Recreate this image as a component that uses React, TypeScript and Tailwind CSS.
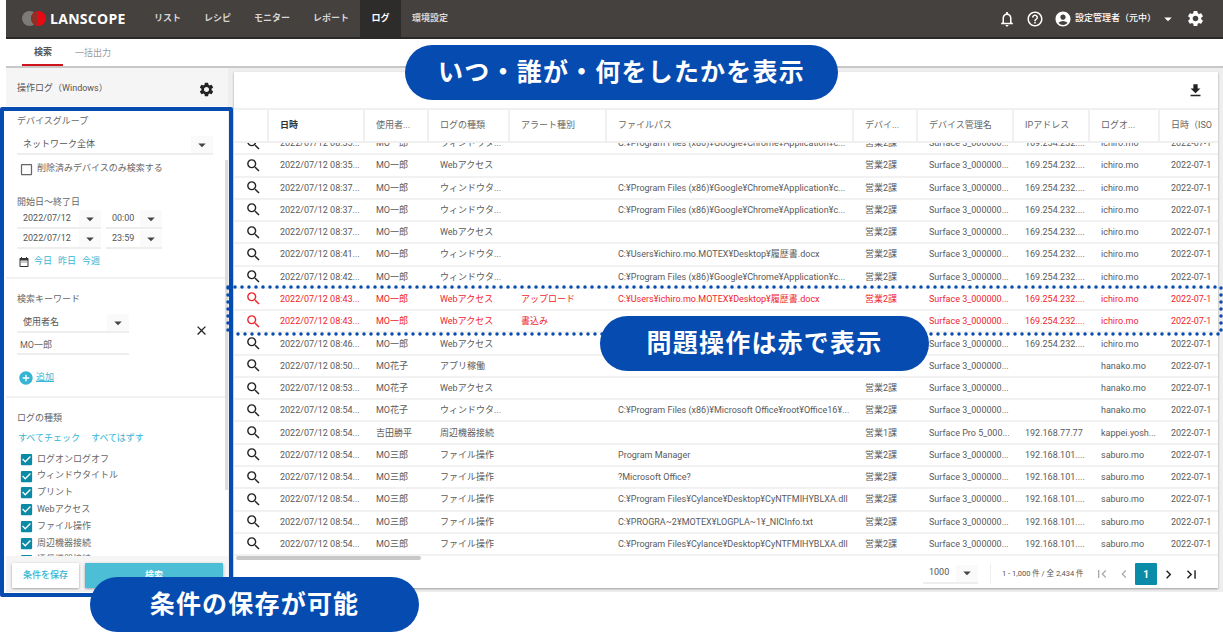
import {
  MdAccountCircle,
  MdAddCircle,
  MdArrowDropDown,
  MdCheckBox,
  MdCheckBoxOutlineBlank,
  MdChevronLeft,
  MdChevronRight,
  MdClose,
  MdDateRange,
  MdFileDownload,
  MdFirstPage,
  MdHelpOutline,
  MdLastPage,
  MdNotificationsNone,
  MdSearch,
  MdSettings,
} from "react-icons/md";

const navItems = ["リスト", "レシピ", "モニター", "レポート"];

const logTypes = [
  "ログオンログオフ",
  "ウィンドウタイトル",
  "プリント",
  "Webアクセス",
  "ファイル操作",
  "周辺機器接続",
  "通信機器接続",
];

const columns = [
  { label: "", width: 34 },
  { label: "日時", width: 96 },
  { label: "使用者...", width: 64 },
  { label: "ログの種類", width: 81 },
  { label: "アラート種別", width: 97 },
  { label: "ファイルパス", width: 247 },
  { label: "デバイ...", width: 64 },
  { label: "デバイス管理名", width: 96 },
  { label: "IPアドレス", width: 76 },
  { label: "ログオ...", width: 70 },
  { label: "日時（ISO", width: 55 },
];

const CHROME = "C:¥Program Files (x86)¥Google¥Chrome¥Application¥c...";
const RESUME = "C:¥Users¥ichiro.mo.MOTEX¥Desktop¥履歴書.docx";
const CYLANCE = "C:¥Program Files¥Cylance¥Desktop¥CyNTFMIHYBLXA.dll";
const WINDOW = "ウィンドウタ...";
const WEB = "Webアクセス";
const FILE = "ファイル操作";
const S3 = "Surface 3_000000...";
const IP1 = "169.254.232....";
const IP2 = "192.168.101....";

// time, user, log type, alert, path, dept, device, ip, logon, danger
const rows: [string, string, string, string, string, string, string, string, string, boolean?][] = [
  ["08:35", "MO一郎", WINDOW, "", CHROME, "営業2課", S3, IP1, "ichiro.mo"],
  ["08:35", "MO一郎", WEB, "", "", "営業2課", S3, IP1, "ichiro.mo"],
  ["08:37", "MO一郎", WINDOW, "", CHROME, "営業2課", S3, IP1, "ichiro.mo"],
  ["08:37", "MO一郎", WINDOW, "", CHROME, "営業2課", S3, IP1, "ichiro.mo"],
  ["08:37", "MO一郎", WEB, "", "", "営業2課", S3, IP1, "ichiro.mo"],
  ["08:41", "MO一郎", WINDOW, "", RESUME, "営業2課", S3, IP1, "ichiro.mo"],
  ["08:42", "MO一郎", WINDOW, "", CHROME, "営業2課", S3, IP1, "ichiro.mo"],
  ["08:43", "MO一郎", WEB, "アップロード", RESUME, "営業2課", S3, IP1, "ichiro.mo", true],
  ["08:43", "MO一郎", WEB, "書込み", "", "営業2課", S3, IP1, "ichiro.mo", true],
  ["08:46", "MO一郎", WEB, "", "", "営業2課", S3, IP1, "ichiro.mo"],
  ["08:50", "MO花子", "アプリ稼働", "", "", "営業2課", S3, "", "hanako.mo"],
  ["08:53", "MO花子", WEB, "", "", "営業2課", S3, "", "hanako.mo"],
  ["08:54", "MO花子", WINDOW, "", "C:¥Program Files (x86)¥Microsoft Office¥root¥Office16¥...", "営業2課", S3, "", "hanako.mo"],
  ["08:54", "吉田勝平", "周辺機器接続", "", "", "営業1課", "Surface Pro 5_000...", "192.168.77.77", "kappei.yosh..."],
  ["08:54", "MO三郎", FILE, "", "Program Manager", "営業2課", S3, IP2, "saburo.mo"],
  ["08:54", "MO三郎", FILE, "", "?Microsoft Office?", "営業2課", S3, IP2, "saburo.mo"],
  ["08:54", "MO三郎", FILE, "", CYLANCE, "営業2課", S3, IP2, "saburo.mo"],
  ["08:54", "MO三郎", FILE, "", "C:¥PROGRA~2¥MOTEX¥LOGPLA~1¥_NICInfo.txt", "営業2課", S3, IP2, "saburo.mo"],
  ["08:54", "MO三郎", FILE, "", CYLANCE, "営業2課", S3, IP2, "saburo.mo"],
];

function PanelSelect({ value, className }: { value: string; className: string }) {
  return (
    <div className={`flex items-center justify-between border-b-2 border-[#eeeeee] ${className}`}>
      <span className="pl-[6px] text-[9px] leading-none text-[#555555]">{value}</span>
      <span className="flex h-full w-[22px] items-center justify-center bg-[#fafafa] text-[#444444]">
        <MdArrowDropDown size={18} />
      </span>
    </div>
  );
}

function Cell({ width, danger, children }: { width: number; danger?: boolean; children: string }) {
  return (
    <div
      className={`shrink-0 pl-3 whitespace-nowrap ${danger ? "text-[#f0242c]" : "text-[#5a5a5a]"}`}
      style={{ width }}
    >
      {children}
    </div>
  );
}

function Callout({ className, children }: { className: string; children: string }) {
  return (
    <div
      className={`absolute z-30 flex items-center justify-center rounded-full bg-[#064bb0] text-[25px] leading-none font-bold tracking-[1.2px] text-white ${className}`}
    >
      {children}
    </div>
  );
}

export default function App() {
  return (
    <div className="relative h-[632px] w-[1223px] overflow-hidden bg-white font-[Roboto,'Noto_Sans_CJK_JP',sans-serif]">
      <div className="ml-[6px] flex h-[592px] flex-col bg-[#eeeeee]">
        {/* Header */}
        <header className="flex h-[39px] shrink-0 items-center border-b-2 border-[#2b2928] bg-[#45413f] text-white">
          <div className="ml-[16px] flex w-[132px] items-center">
            <div className="relative h-[15px] w-[24px] shrink-0">
              <span className="absolute top-0 left-0 size-[15px] rounded-full bg-[#7d7b78]" />
              <span className="absolute top-0 left-[9px] size-[15px] rounded-full bg-[#e60a14]" />
              <span className="absolute top-[1px] left-[9px] h-[13px] w-[6px] rounded-l-full bg-[#8d3026]" />
            </div>
            <span className="ml-[4px] font-['Open_Sans',sans-serif] text-[14px] leading-none font-bold tracking-[0.3px]">
              LANSCOPE
            </span>
          </div>
          <nav className="flex h-full items-center text-[9px] font-bold text-[#d8d6d4]">
            {navItems.map((item) => (
              <span key={item} className="mr-[23px]">
                {item}
              </span>
            ))}
            <span className="-ml-[12px] flex h-full w-[41px] items-center justify-center bg-[#2e2c2b] text-white">ログ</span>
            <span className="ml-[11px]">環境設定</span>
          </nav>
          <div className="ml-auto flex items-center pr-[18px]">
            <MdNotificationsNone size={18} />
            <MdHelpOutline size={18} className="ml-[10px]" />
            <MdAccountCircle size={18} className="ml-[10px]" />
            <span className="ml-[3px] w-[78px] text-[9px] font-medium whitespace-nowrap">設定管理者（元中）</span>
            <MdArrowDropDown size={18} className="ml-[6px]" />
            <MdSettings size={19} className="ml-[9px]" />
          </div>
        </header>

        {/* Tabs */}
        <div className="flex h-[29px] shrink-0 border-b-2 border-[#c8c8c8] bg-white pl-[16px] text-[9px]">
          <div className="flex w-[41px] items-center justify-center border-b-2 border-[#d0121b] pt-[2px] pl-[1px] font-bold text-[#555555]">検索</div>
          <div className="ml-[12px] flex items-center pt-[2px] text-[#9a9a9a]">一括出力</div>
        </div>

        <div className="flex min-h-0 flex-1">
          {/* Conditions panel */}
          <aside className="relative flex h-[522px] w-[222px] shrink-0 flex-col overflow-hidden bg-white">
            <div className="flex h-[38px] shrink-0 items-center justify-between bg-[#f5f5f5] pt-[4px] pr-[13px] pl-[11px]">
              <span className="text-[9px] text-[#555555]">操作ログ（Windows）</span>
              <MdSettings size={17} className="text-[#222222]" />
            </div>
            <div className="min-h-0 flex-1 overflow-hidden text-[9px] text-[#666666]">
              <div className="mx-[11px] mt-[8px] leading-[14px]">デバイスグループ</div>
              <PanelSelect value="ネットワーク全体" className="mt-[8px] mr-[15px] ml-[11px] h-[19px]" />
              <div className="mt-[7px] ml-[13px] flex h-[14px] items-center">
                <MdCheckBoxOutlineBlank size={15} className="text-[#666666]" />
                <span className="ml-[3px]">削除済みデバイスのみ検索する</span>
              </div>
              <div className="mx-[11px] mt-[19px] leading-[14px]">開始日～終了日</div>
              {["2022/07/12|00:00", "2022/07/12|23:59"].map((pair) => (
                <div key={pair} className="mt-[1px] ml-[11px] flex">
                  <PanelSelect value={pair.split("|")[0]} className="h-[19px] w-[84px]" />
                  <PanelSelect value={pair.split("|")[1]} className="ml-[5px] h-[19px] w-[56px]" />
                </div>
              ))}
              <div className="mt-[6px] ml-[12px] flex h-[14px] items-center text-[#35b5d3]">
                <MdDateRange size={12} className="text-[#333333]" />
                <span className="ml-[4px]">今日</span>
                <span className="ml-[6px]">昨日</span>
                <span className="ml-[6px]">今週</span>
              </div>
              <div className="mt-[8px] border-t-2 border-[#f2f2f2]" />

              <div className="mx-[11px] mt-[13px] leading-[14px]">検索キーワード</div>
              <div className="relative mt-[8px] ml-[11px] w-[112px]">
                <PanelSelect value="使用者名" className="h-[19px]" />
                <div className="mt-[6px] h-[16px] border-b-2 border-[#eeeeee] pl-[3px] leading-[12px]">MO一郎</div>
                <MdClose size={15} className="absolute top-[9px] left-[177px] text-[#222222]" />
              </div>
              <div className="mt-[15px] ml-[12px] flex h-[16px] items-center text-[#35b5d3]">
                <MdAddCircle size={16} />
                <span className="ml-[2px] underline">追加</span>
              </div>
              <div className="mt-[10px] border-t-2 border-[#f2f2f2]" />

              <div className="mx-[11px] mt-[13px] leading-[14px]">ログの種類</div>
              <div className="mt-[6px] ml-[12px] flex leading-[14px] text-[#35b5d3]">
                <span>すべてチェック</span>
                <span className="ml-[11px]">すべてはずす</span>
              </div>
              <div className="mt-[6px] ml-[13px]">
                {logTypes.map((type) => (
                  <div key={type} className="flex h-[16.8px] items-center">
                    <MdCheckBox size={15} className="shrink-0 text-[#0b8aa5]" />
                    <span className="ml-[3px]">{type}</span>
                  </div>
                ))}
              </div>
            </div>
            <div className="flex h-[34px] shrink-0 items-start gap-[6px] bg-[#f5f5f5] pt-[7px] pl-[6px]">
              <button className="h-[25px] w-[67px] rounded-[1px] bg-white text-[9px] font-medium text-[#35b5d3] shadow-[0_1px_3px_rgba(0,0,0,0.35)]">
                条件を保存
              </button>
              <button className="h-[25px] w-[138px] rounded-[1px] bg-[#4cbfd6] text-[9px] font-medium text-white shadow-[0_1px_3px_rgba(0,0,0,0.35)]">
                検索
              </button>
            </div>
            <div className="absolute top-[92px] right-0 h-[330px] w-[3px] bg-[#dddddd]" />
          </aside>

          {/* Log table */}
          <main className="mt-[4px] ml-[6px] flex h-[516px] w-[984px] flex-col bg-white shadow-[0_1px_2px_rgba(0,0,0,0.35)]">
            <div className="flex h-[36px] shrink-0 items-center justify-end pr-[14px]">
              <MdFileDownload size={17} className="text-[#222222]" />
            </div>
            <div className="flex h-[35px] shrink-0 border-t-2 border-b-2 border-[#f0f0f0] text-[9px]">
              {columns.map((col, i) => (
                <div
                  key={col.label || "icon"}
                  className={`flex shrink-0 -translate-x-px items-center whitespace-nowrap ${i > 0 ? "border-l-2 border-[#f0f0f0] pl-[11px]" : ""} ${i === 1 ? "font-bold text-[#333333]" : "text-[#666666]"}`}
                  style={{ width: col.width }}
                >
                  {col.label}
                </div>
              ))}
            </div>
            <div className="relative h-[417px] shrink-0 overflow-hidden">
              <div className="-mt-[10px] text-[9px] leading-[20px]">
                {rows.map((row, index) => {
                  const danger = row[9];
                  const cells = [`2022/07/12 ${row[0]}...`, ...row.slice(1, 9), "2022-07-1"] as string[];
                  return (
                    <div key={index} className="flex h-[22.28px] items-center border-b-2 border-[#f2f2f2]">
                      <div className="flex w-[34px] shrink-0 justify-center pl-[5px]">
                        <MdSearch size={17} className={danger ? "text-[#f0242c]" : "text-[#222222]"} />
                      </div>
                      {cells.map((cell, i) => (
                        <Cell key={i} width={columns[i + 1].width} danger={danger}>
                          {cell}
                        </Cell>
                      ))}
                    </div>
                  );
                })}
              </div>
              <div className="absolute bottom-0 left-[2px] h-[4px] w-[185px] rounded-full bg-[#c8c8c8]" />
            </div>
            <div className="flex flex-1 items-center text-[#555555]">
              <div className="ml-[689px] flex h-[19px] w-[55px] items-center justify-between border-b-2 border-[#eeeeee] text-[9px]">
                <span className="pl-[6px]">1000</span>
                <span className="flex h-full w-[22px] items-center justify-center bg-[#fafafa] text-[#444444]">
                  <MdArrowDropDown size={18} />
                </span>
              </div>
              <div className="ml-[12px] h-[20px] border-l border-[#eeeeee]" />
              <span className="ml-[11px] w-[88px] text-[7.5px] whitespace-nowrap">1 - 1,000 件 / 全 2,434 件</span>
              <MdFirstPage size={16} className="ml-[4px] text-[#aaaaaa]" />
              <MdChevronLeft size={16} className="ml-[6px] text-[#aaaaaa]" />
              <span className="ml-[3px] flex size-[22px] items-center justify-center rounded-[1px] bg-[#0a8ca8] text-[10px] font-bold text-white">1</span>
              <MdChevronRight size={17} className="ml-[3px] text-[#222222]" />
              <MdLastPage size={17} className="ml-[6px] text-[#222222]" />
            </div>
          </main>
        </div>
      </div>

      {/* Annotations over the screenshot */}
      <div className="absolute top-[107px] left-0 z-20 h-[490px] w-[233px] rounded-[2px] border-[4px] border-[#064bb0]" />
      <svg className="absolute top-[285px] left-[226px] z-20" width="997" height="51" fill="none">
        <rect x="2" y="2" width="993" height="47" stroke="#064bb0" strokeWidth="3.5" strokeLinecap="round" strokeDasharray="0 7" />
      </svg>
      <Callout className="top-[45px] left-[405px] h-[55px] w-[433px]">いつ・誰が・何をしたかを表示</Callout>
      <Callout className="top-[316px] left-[600px] h-[55px] w-[329px]">問題操作は赤で表示</Callout>
      <Callout className="top-[577px] left-[90px] h-[55px] w-[329px]">条件の保存が可能</Callout>
    </div>
  );
}
